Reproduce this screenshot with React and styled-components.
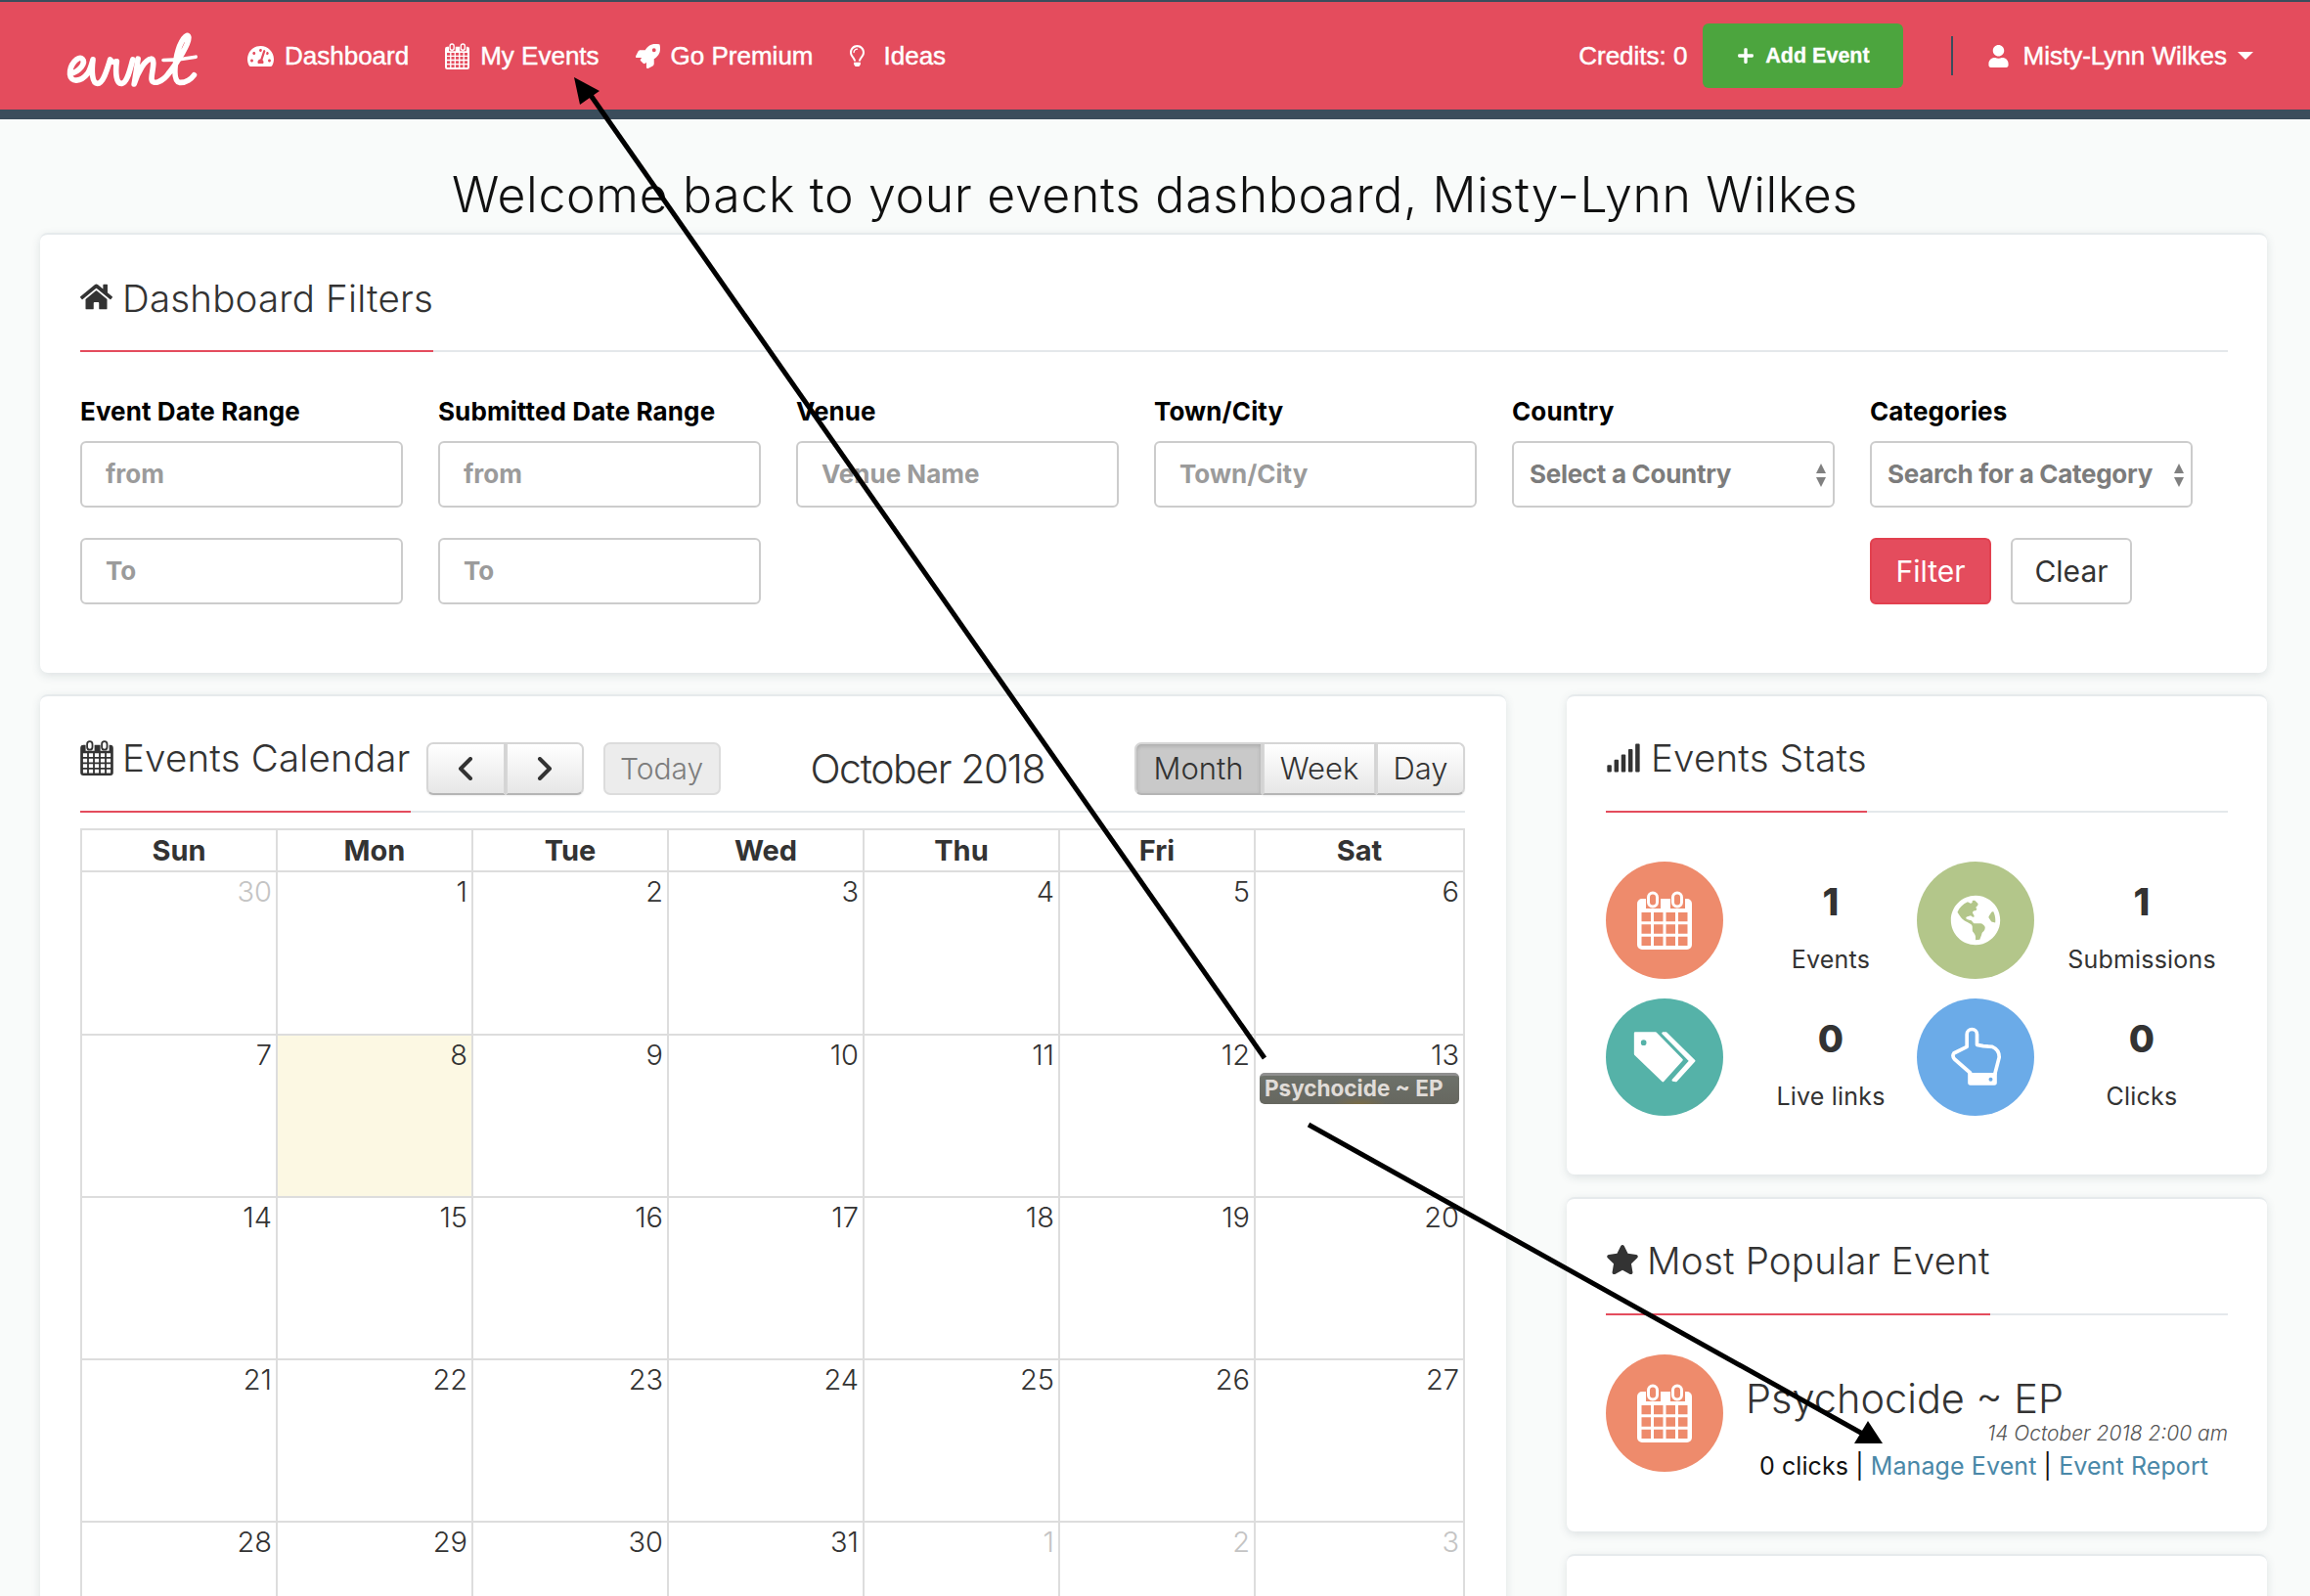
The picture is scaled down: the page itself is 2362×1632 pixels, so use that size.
import React from 'react';
import styled, { createGlobalStyle } from 'styled-components';
import {
  FaTachometerAlt,
  FaRocket,
  FaRegLightbulb,
  FaUser,
  FaPlus,
  FaHome,
  FaSignal,
  FaStar,
  FaGlobeAmericas,
} from 'react-icons/fa';

const GlobalStyle = createGlobalStyle`
  html, body {
    margin: 0;
    padding: 0;
    background: #f9fbfa;
  }
  body {
    font-family: Inter, "Open Sans", sans-serif;
    color: #333;
  }
  * {
    box-sizing: border-box;
  }
`;

const Page = styled.div`
  position: relative;
  width: 2362px;
  height: 1632px;
  overflow: hidden;
`;

const Header = styled.header`
  height: 122px;
  display: flex;
  align-items: center;
  padding: 0 58px 0 67px;
  background: #e44c5d;
  border-top: 2px solid #3b4d5c;
  border-bottom: 10px solid #3b4d5c;
  font-family: "Liberation Sans", Arial, sans-serif;
  color: #fff;
  font-size: 26px;
`;

const Logo = styled.svg`
  width: 137px;
  height: 58px;
  margin: 10px 49px 0 0;
  flex-shrink: 0;
`;

const NavList = styled.nav`
  display: flex;
  align-items: center;
  gap: 37px;
`;

const NavItem = styled.a`
  display: flex;
  align-items: center;
  gap: ${(p) => p.$gap || 11}px;
  color: #fff;
  white-space: nowrap;
  -webkit-text-stroke: 0.45px #fff;
`;

const HeaderRight = styled.div`
  margin-left: auto;
  display: flex;
  align-items: center;
`;

const Credits = styled.span`
  margin-right: 16px;
  -webkit-text-stroke: 0.45px #fff;
`;

const AddButton = styled.button`
  width: 205px;
  height: 66px;
  display: flex;
  align-items: center;
  justify-content: center;
  gap: 11px;
  border: none;
  border-radius: 6px;
  background: #4ca53e;
  color: #fff;
  font-family: "Liberation Sans", Arial, sans-serif;
  font-size: 21.5px;
  font-weight: 700;
  -webkit-text-stroke: 0.3px #fff;
`;

const Separator = styled.div`
  width: 2px;
  height: 40px;
  margin: 0 35px 0 49px;
  background: #3b4d5c;
`;

const UserMenu = styled.div`
  display: flex;
  align-items: center;
  gap: 13px;
  -webkit-text-stroke: 0.45px #fff;
`;

const Caret = styled.span`
  width: 0;
  height: 0;
  margin-left: -2px;
  border-left: 8px solid transparent;
  border-right: 8px solid transparent;
  border-top: 8px solid #fff;
`;

const Welcome = styled.h1`
  margin: 0;
  padding-top: 42px;
  height: 116px;
  line-height: 70px;
  text-align: center;
  font-size: 50px;
  font-weight: 300;
  color: #111;
  letter-spacing: 0.66px;
`;

const Main = styled.main`
  padding: 0 44px 0 41px;
`;

const Card = styled.section`
  background: #fff;
  border-radius: 8px;
  border-top: 2px solid #e6eaec;
  padding: ${(p) => p.$top || 38}px ${(p) => p.$right || 40}px ${(p) => p.$bottom || 0}px 41px;
  box-shadow: 0 3px 10px rgba(60, 80, 90, 0.14);
`;

const TitleBar = styled.div`
  display: flex;
  align-items: flex-start;
  border-bottom: 2px solid #e4e8eb;
  height: ${(p) => p.$height || 81}px;
`;

const Title = styled.h2`
  margin: 0;
  height: ${(p) => p.$height || 81}px;
  display: inline-flex;
  align-items: flex-start;
  gap: ${(p) => p.$gap || 10}px;
  font-size: 38.5px;
  line-height: 50px;
  font-weight: 300;
  color: #333;
  white-space: nowrap;
  border-bottom: 2px solid #e44c5d;
  letter-spacing: 0.2px;

  svg {
    margin-top: 7px;
  }
`;

const FilterGrid = styled.div`
  display: grid;
  grid-template-columns: repeat(6, 330px);
  column-gap: 36px;
  row-gap: 31px;
  margin-top: 46px;
`;

const Field = styled.div`
  display: flex;
  flex-direction: column;
  gap: 15px;
`;

const Label = styled.label`
  font-size: 26px;
  line-height: 30px;
  font-weight: 700;
  color: #000;
  letter-spacing: 0.1px;
  white-space: nowrap;
`;

const TextInput = styled.input`
  width: 330px;
  height: 68px;
  padding: 0 24px;
  border: 2px solid #ccc;
  border-radius: 6px;
  background: #fff;
  font-family: Inter, sans-serif;
  font-size: 26px;
  font-weight: 700;
  letter-spacing: 0;
  outline: none;

  &::placeholder {
    color: #9b9b9b;
    opacity: 1;
  }
`;

const SelectBox = styled.div`
  position: relative;
  width: 330px;
  height: 68px;
  padding: 0 16px;
  display: flex;
  align-items: center;
  border: 2px solid #ccc;
  border-radius: 6px;
  background: #fff;
  font-size: 26px;
  font-weight: 700;
  color: #7c7c7c;
  white-space: nowrap;
  letter-spacing: -0.3px;

  &::before,
  &::after {
    content: '';
    position: absolute;
    right: 7px;
    border-left: 5px solid transparent;
    border-right: 5px solid transparent;
  }
  &::before {
    top: 21px;
    border-bottom: 10px solid #808080;
  }
  &::after {
    top: 35px;
    border-top: 10px solid #808080;
  }
`;

const FilterActions = styled.div`
  grid-column: 6;
  display: flex;
  gap: 20px;
`;

const FilterButton = styled.button`
  width: 124px;
  height: 68px;
  border-radius: 6px;
  border: 2px solid ${(p) => (p.$primary ? '#e2404f' : '#ccc')};
  background: ${(p) => (p.$primary ? '#e44c5d' : '#fff')};
  color: ${(p) => (p.$primary ? '#fff' : '#333')};
  font-family: Inter, sans-serif;
  font-size: 30px;
  font-weight: 400;
`;

const Columns = styled.div`
  display: grid;
  grid-template-columns: 1499px 716px;
  column-gap: 62px;
  margin-top: 22px;
  align-items: start;
`;

const SideColumn = styled.div`
  display: flex;
  flex-direction: column;
  gap: 23px;

  ${Card} {
    padding-left: 40px;
  }
`;

const CalendarCard = styled(Card)`
  height: 1100px;
`;

const ToolButton = styled.button`
  height: 54px;
  width: ${(p) => p.$width}px;
  border: 2px solid #d6d6d6;
  border-bottom-color: #b5b5b5;
  background: linear-gradient(#fff, #e6e6e6);
  box-shadow: 0 1px 2px rgba(0, 0, 0, 0.06);
  color: #333;
  font-family: Inter, sans-serif;
  font-size: 31px;
  font-weight: 300;
  display: flex;
  align-items: center;
  justify-content: center;
  padding: 0;

  &:first-child {
    border-radius: 7px 0 0 7px;
  }
  &:last-child {
    border-radius: 0 7px 7px 0;
  }

  ${(p) => p.$active && `
    background: #c9c9c9;
    box-shadow: inset 0 2px 4px rgba(0, 0, 0, 0.15);
  `}
`;

const ToolGroup = styled.div`
  display: flex;
  margin: 9px 0 0 ${(p) => p.$left || 0}px;
`;

const TodayButton = styled.button`
  height: 54px;
  width: 120px;
  margin: 9px 0 0 20px;
  border: 2px solid #dcdcdc;
  border-radius: 7px;
  background: #ececec;
  color: #7d7d7d;
  font-family: Inter, sans-serif;
  font-size: 30px;
  font-weight: 300;
`;

const MonthTitle = styled.div`
  flex: 1;
  padding-top: 9px;
  line-height: 54px;
  text-align: center;
  font-size: 41px;
  font-weight: 300;
  letter-spacing: -1.4px;
  color: #333;
`;

const CalendarGrid = styled.div`
  display: grid;
  grid-template-columns: repeat(6, 200px) 214px;
  grid-template-rows: 43px 167px repeat(4, 166px);
  width: 1416px;
  margin-top: 16px;
  border-top: 2px solid #ddd;
  border-left: 2px solid #ddd;
`;

const DayHead = styled.div`
  border-right: 2px solid #ddd;
  border-bottom: 2px solid #ddd;
  text-align: center;
  font-size: 29px;
  line-height: 41px;
  font-weight: 700;
  color: #333;
`;

const DayCell = styled.div`
  border-right: 2px solid #ddd;
  border-bottom: 2px solid #ddd;
  background: ${(p) => (p.$today ? '#fcf8e3' : '#fff')};
  padding: 2px 4px 0 4px;
`;

const DayNumber = styled.div`
  text-align: right;
  font-size: 29px;
  line-height: 36px;
  font-weight: 300;
  color: ${(p) => (p.$muted ? '#c4c4c4' : '#333')};
`;

const EventBar = styled.div`
  height: 32px;
  padding-left: 5px;
  border-top: 3px solid #8f8f8f;
  border-radius: 5px;
  background:
    radial-gradient(ellipse 28px 8px at 50% 100%, #7a6c45, transparent),
    linear-gradient(#6d716a, #66675f);
  color: #e0dcd8;
  font-size: 22.5px;
  line-height: 26px;
  font-weight: 700;
  white-space: nowrap;
`;

const StatsGrid = styled.div`
  display: grid;
  grid-template-columns: 318px 318px;
  row-gap: 20px;
  margin-top: 50px;
`;

const StatItem = styled.div`
  display: flex;
`;

const IconCircle = styled.div`
  width: 120px;
  height: 120px;
  flex-shrink: 0;
  border-radius: 50%;
  display: flex;
  align-items: center;
  justify-content: center;
  background: ${(p) => p.$color};
  color: #fff;
`;

const StatText = styled.div`
  flex: 0 0 220px;
  padding-top: 16px;
  text-align: center;
`;

const StatNumber = styled.div`
  font-size: 38px;
  line-height: 50px;
  font-weight: 800;
  color: #333;
`;

const StatLabel = styled.div`
  margin-top: 17px;
  font-size: 25px;
  line-height: 34px;
  font-weight: 400;
  letter-spacing: 0.2px;
  color: #333;
`;

const PopularRow = styled.div`
  display: flex;
  gap: 23px;
  margin-top: 40px;
`;

const PopularText = styled.div`
  flex: 1;
  padding-top: 20px;
`;

const PopularName = styled.div`
  font-size: 41.5px;
  line-height: 50px;
  font-weight: 300;
  color: #333;
`;

const PopularDate = styled.div`
  margin-top: -3px;
  text-align: right;
  font-size: 21px;
  line-height: 28px;
  font-style: italic;
  font-weight: 300;
  color: #555;
`;

const PopularLinks = styled.div`
  margin-top: 5px;
  padding-right: 6px;
  text-align: center;
  font-size: 25px;
  line-height: 28px;
  font-weight: 400;
  letter-spacing: 0.1px;
  color: #111;
  white-space: nowrap;
`;

const PopularLink = styled.a`
  color: #4a88a8;
`;

const EmptyCard = styled(Card)`
  height: 200px;
`;

const Overlay = styled.svg`
  position: absolute;
  left: 0;
  top: 0;
  pointer-events: none;
`;

const calendarPath = (cols, rows) => {
  let d = 'M5 8H9V18H24V8H34V18H49V8H51A5 5 0 0 1 56 13V55A5 5 0 0 1 51 60H5A5 5 0 0 1 0 55V13A5 5 0 0 1 5 8Z';
  const gap = 3;
  const cellW = (47 - gap * (cols - 1)) / cols;
  const cellH = (34 - gap * (rows - 1)) / rows;
  for (let r = 0; r < rows; r++) {
    for (let c = 0; c < cols; c++) {
      const x = 4.5 + c * (cellW + gap);
      const y = 22 + r * (cellH + gap);
      d += `M${x} ${y}h${cellW}v${cellH}h-${cellW}Z`;
    }
  }
  return d;
};

const CalendarIcon = ({ width, height, cols = 4, rows = 3 }) => (
  <svg width={width} height={height} viewBox="0 0 56 60" fill="currentColor">
    <path fillRule="evenodd" d={calendarPath(cols, rows)} />
    <rect x="11.5" y="2" width="9" height="14" rx="4.5" fill="none" stroke="currentColor" strokeWidth="3" />
    <rect x="36.5" y="2" width="9" height="14" rx="4.5" fill="none" stroke="currentColor" strokeWidth="3" />
  </svg>
);

const TagIcon = () => (
  <svg width="70" height="57" viewBox="80 95 210 170" fill="#fff" stroke="#fff" strokeWidth="7" strokeLinejoin="round">
    <path
      fillRule="evenodd"
      d="M95 108H158L238 190L180 254L95 172ZM109 137A12 12 0 1 0 133 137A12 12 0 1 0 109 137Z"
    />
    <path d="M180 108H190L276 193L220 254L211 252L264 193Z" />
  </svg>
);

const HandIcon = () => (
  <svg width="57" height="65" viewBox="1055 85 170 195">
    <path
      d="M1112 152V114A15 15 0 0 1 1143 114V146L1162 150L1190 152Q1212 162 1211 185L1198 235M1112 152L1072 172Q1066 180 1074 190L1122 232"
      fill="none"
      stroke="#fff"
      strokeWidth="11"
      strokeLinecap="round"
      strokeLinejoin="round"
    />
    <path
      fillRule="evenodd"
      fill="#fff"
      d="M1115 232H1204V262Q1204 270 1196 270H1123Q1115 270 1115 262ZM1179 252A6 6 0 1 0 1191 252A6 6 0 1 0 1179 252Z"
    />
  </svg>
);

const Chevron = ({ flip }) => (
  <svg width="18" height="24" viewBox="0 0 18 24" fill="none" stroke="#333" strokeWidth="4" strokeLinecap="round" strokeLinejoin="round">
    <path d={flip ? 'M4 2L14 12L4 22' : 'M14 2L4 12L14 22'} />
  </svg>
);

const days = ['Sun', 'Mon', 'Tue', 'Wed', 'Thu', 'Fri', 'Sat'];

const weeks = [
  [30, 1, 2, 3, 4, 5, 6],
  [7, 8, 9, 10, 11, 12, 13],
  [14, 15, 16, 17, 18, 19, 20],
  [21, 22, 23, 24, 25, 26, 27],
  [28, 29, 30, 31, 1, 2, 3],
];

const isMuted = (week, i) => (week === 0 && i === 0) || (week === 4 && i >= 4);

const stats = [
  { color: '#ee8b6c', icon: <CalendarIcon width={56} height={60} />, value: 1, label: 'Events' },
  { color: '#b3c68a', icon: <FaGlobeAmericas size={52} />, value: 1, label: 'Submissions' },
  { color: '#55b2a8', icon: <TagIcon />, value: 0, label: 'Live links' },
  { color: '#6babe8', icon: <HandIcon />, value: 0, label: 'Clicks' },
];

const App = () => {
  return (
    <Page>
      <GlobalStyle />
      <Header>
        <Logo viewBox="50 40 410 175" fill="none" stroke="#fff" strokeWidth="17" strokeLinecap="round" strokeLinejoin="round" aria-label="evvnt">
          <path d="M64 168C92 160 112 135 100 122C88 110 60 140 62 170C64 195 95 195 118 165C126 152 130 135 133 124C128 160 130 198 147 198C165 198 178 150 186 124C190 132 198 134 206 130" />
          <path d="M206 130C202 165 204 200 222 198C240 195 248 150 256 124" />
          <path d="M272 122C268 148 264 178 260 200C272 160 294 124 312 122C328 122 312 170 314 185C317 205 350 192 368 165" />
          <path d="M368 165C395 130 430 75 428 55C425 38 402 65 392 110C385 145 380 190 400 195C420 197 438 182 445 172" />
          <path d="M350 126C385 126 420 122 450 116" strokeWidth="11" />
        </Logo>
        <NavList>
          <NavItem>
            <FaTachometerAlt size={27} />
            Dashboard
          </NavItem>
          <NavItem>
            <CalendarIcon width={25} height={27} cols={5} rows={4} />
            My Events
          </NavItem>
          <NavItem>
            <FaRocket size={25} />
            Go Premium
          </NavItem>
          <NavItem $gap={20}>
            <FaRegLightbulb size={22} style={{ width: 15 }} />
            Ideas
          </NavItem>
        </NavList>
        <HeaderRight>
          <Credits>Credits: 0</Credits>
          <AddButton>
            <FaPlus size={18} />
            Add Event
          </AddButton>
          <Separator />
          <UserMenu>
            <FaUser size={23} />
            Misty-Lynn Wilkes
            <Caret />
          </UserMenu>
        </HeaderRight>
      </Header>

      <Welcome>Welcome back to your events dashboard, Misty-Lynn Wilkes</Welcome>

      <Main>
        <Card $top={39.5} $bottom={70}>
          <TitleBar $height={80}>
            <Title $height={80} $gap={10}>
              <FaHome size={33} />
              Dashboard Filters
            </Title>
          </TitleBar>
          <FilterGrid>
            <Field>
              <Label>Event Date Range</Label>
              <TextInput placeholder="from" />
            </Field>
            <Field>
              <Label>Submitted Date Range</Label>
              <TextInput placeholder="from" />
            </Field>
            <Field>
              <Label>Venue</Label>
              <TextInput placeholder="Venue Name" />
            </Field>
            <Field>
              <Label>Town/City</Label>
              <TextInput placeholder="Town/City" />
            </Field>
            <Field>
              <Label>Country</Label>
              <SelectBox>Select a Country</SelectBox>
            </Field>
            <Field>
              <Label>Categories</Label>
              <SelectBox>Search for a Category</SelectBox>
            </Field>
            <TextInput placeholder="To" />
            <TextInput placeholder="To" />
            <FilterActions>
              <FilterButton $primary>Filter</FilterButton>
              <FilterButton>Clear</FilterButton>
            </FilterActions>
          </FilterGrid>
        </Card>

        <Columns>
          <CalendarCard $right={42}>
            <TitleBar>
              <Title $gap={9}>
                <CalendarIcon width={34} height={36} cols={5} rows={4} />
                Events Calendar
              </Title>
              <ToolGroup $left={16}>
                <ToolButton $width={81}>
                  <Chevron />
                </ToolButton>
                <ToolButton $width={80}>
                  <Chevron flip />
                </ToolButton>
              </ToolGroup>
              <TodayButton>Today</TodayButton>
              <MonthTitle>October 2018</MonthTitle>
              <ToolGroup>
                <ToolButton $width={131} $active>Month</ToolButton>
                <ToolButton $width={116}>Week</ToolButton>
                <ToolButton $width={91}>Day</ToolButton>
              </ToolGroup>
            </TitleBar>
            <CalendarGrid>
              {days.map((day) => (
                <DayHead key={day}>{day}</DayHead>
              ))}
              {weeks.map((week, w) =>
                week.map((num, i) => (
                  <DayCell key={`${w}-${i}`} $today={w === 1 && i === 1}>
                    <DayNumber $muted={isMuted(w, i)}>{num}</DayNumber>
                    {w === 1 && i === 6 && <EventBar>Psychocide ~ EP</EventBar>}
                  </DayCell>
                ))
              )}
            </CalendarGrid>
          </CalendarCard>

          <SideColumn>
            <Card $bottom={60}>
              <TitleBar>
                <Title $gap={10}>
                  <FaSignal size={36} />
                  Events Stats
                </Title>
              </TitleBar>
              <StatsGrid>
                {stats.map((stat) => (
                  <StatItem key={stat.label}>
                    <IconCircle $color={stat.color}>{stat.icon}</IconCircle>
                    <StatText>
                      <StatNumber>{stat.value}</StatNumber>
                      <StatLabel>{stat.label}</StatLabel>
                    </StatText>
                  </StatItem>
                ))}
              </StatsGrid>
            </Card>

            <Card $bottom={53}>
              <TitleBar>
                <Title $gap={8}>
                  <FaStar size={34} />
                  Most Popular Event
                </Title>
              </TitleBar>
              <PopularRow>
                <IconCircle $color="#ee8b6c">
                  <CalendarIcon width={56} height={60} />
                </IconCircle>
                <PopularText>
                  <PopularName>Psychocide ~ EP</PopularName>
                  <PopularDate>14 October 2018 2:00 am</PopularDate>
                  <PopularLinks>
                    0 clicks | <PopularLink>Manage Event</PopularLink> | <PopularLink>Event Report</PopularLink>
                  </PopularLinks>
                </PopularText>
              </PopularRow>
            </Card>

            <EmptyCard />
          </SideColumn>
        </Columns>
      </Main>

      {/* annotation arrows drawn on top of the screenshot */}
      <Overlay width="2362" height="1632">
        <line x1="1293" y1="1082" x2="603" y2="96" stroke="#000" strokeWidth="5" />
        <polygon points="587,79 613,93 593,107" fill="#000" />
        <line x1="1338" y1="1150" x2="1908" y2="1468" stroke="#000" strokeWidth="5" />
        <polygon points="1910,1453 1925,1476 1896,1476" fill="#000" />
      </Overlay>
    </Page>
  );
};

export default App;
